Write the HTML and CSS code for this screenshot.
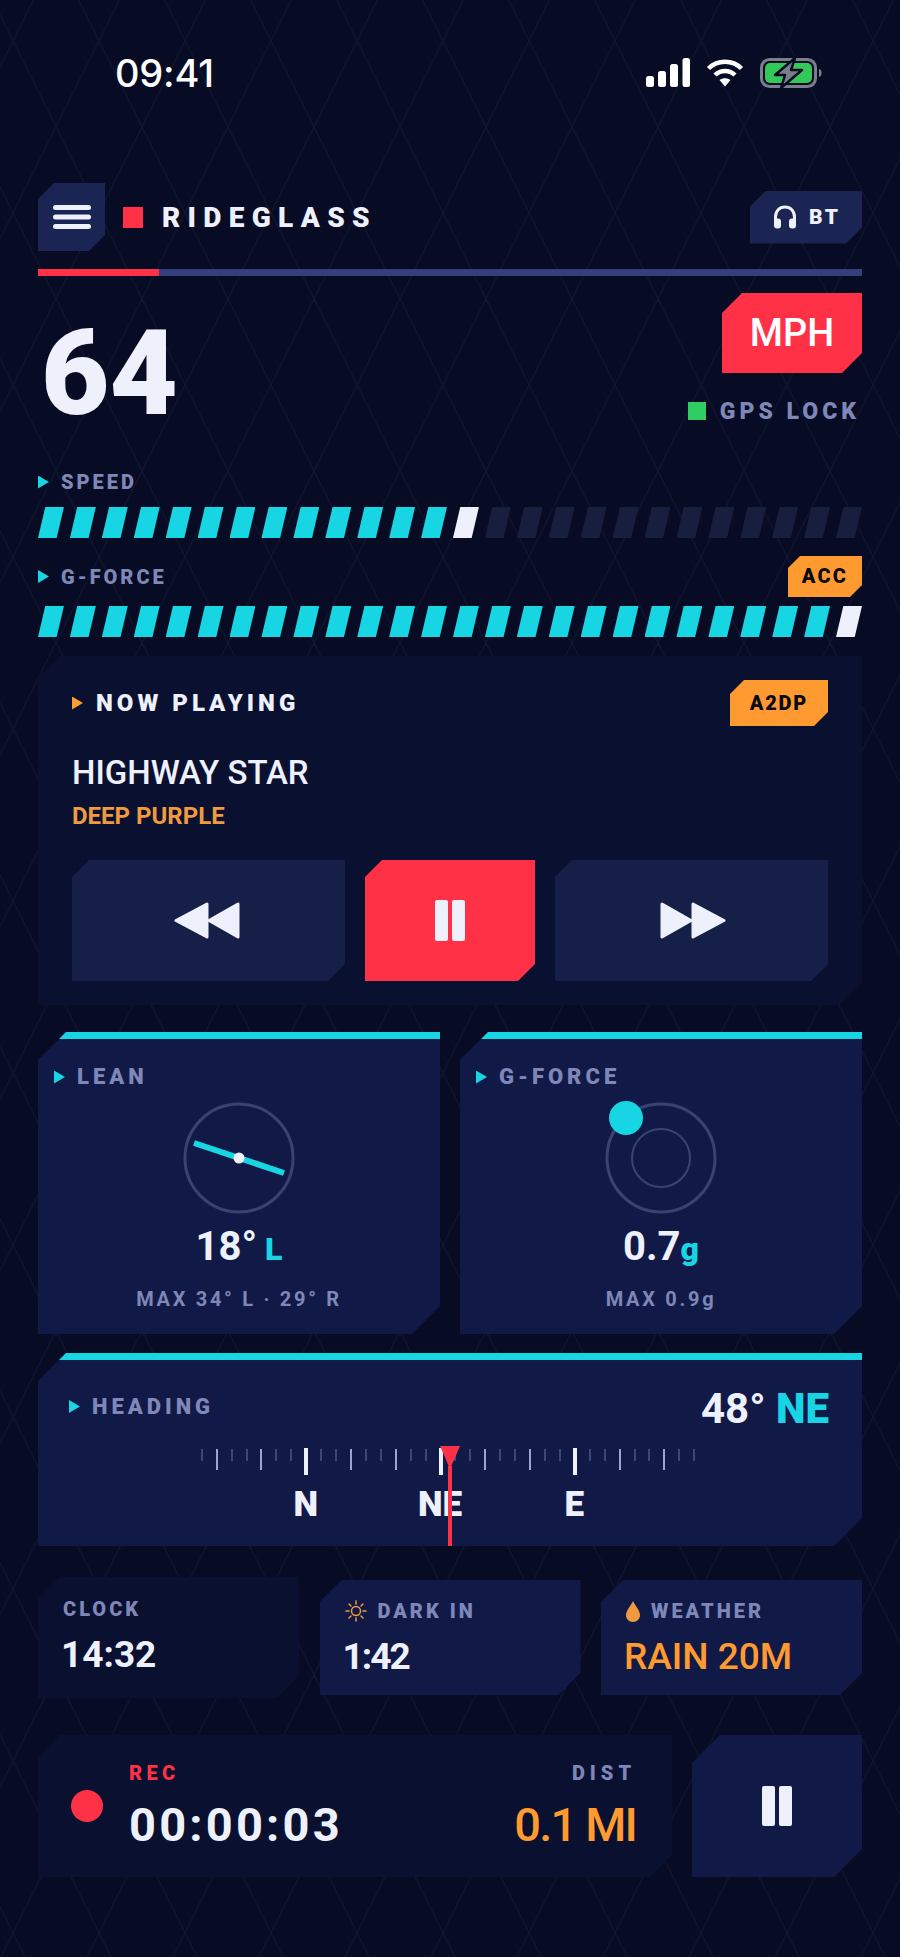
FILE: index.html
```html
<!DOCTYPE html>
<html lang="en">
<head>
  <meta charset="UTF-8">
  <meta name="viewport" content="width=device-width, initial-scale=1">
  <title>RideGlass</title>
  <link rel="stylesheet" href="styles.css">
</head>
<body>
<div class="screen">

  <!-- Status bar -->
  <div class="status">
    <span class="status-time">09:41</span>
    <div class="status-icons">
      <svg width="44" height="30" viewBox="0 0 44 30" fill="#fff">
        <rect x="0" y="18" width="8" height="11" rx="2.500"/>
        <rect x="12" y="13" width="8" height="16" rx="2.500"/>
        <rect x="24" y="6" width="8" height="23" rx="2.500"/>
        <rect x="36.500" y="0" width="7.500" height="29" rx="2.500"/>
      </svg>
      <svg width="38" height="30" viewBox="0 0 38 30" fill="none" stroke="#fff" stroke-width="4.500">
        <path d="M2.500 10.500C11.500 1.500 26.500 1.500 35.500 10.500"/>
        <path d="M9 17C14.500 11.500 23.500 11.500 29 17"/>
        <path d="M13.500 22L19 28.500L24.500 22C21 19.500 17 19.500 13.500 22Z" fill="#fff" stroke="none"/>
      </svg>
      <svg width="62" height="30" viewBox="0 0 62 30">
        <rect x="1.500" y="1.500" width="54" height="27" rx="8" fill="none" stroke="#7b7e8d" stroke-width="3"/>
        <rect x="5" y="5" width="47" height="20" rx="5" fill="#34c759"/>
        <path d="M59 11C61 11.500 61.500 13 61.500 15C61.500 17 61 18.500 59 19Z" fill="#7b7e8d"/>
        <path d="M35 0L15 17H25L21 30L42 12H31Z" fill="#7b7e8d" stroke="#060a22" stroke-width="2.500" stroke-linejoin="round"/>
      </svg>
    </div>
  </div>

  <!-- Top bar -->
  <div class="topbar">
    <button class="menu-btn">
      <svg width="38" height="24" viewBox="0 0 38 24" fill="#eef1fb">
        <rect x="0" y="0" width="38" height="5" rx="2.500"/>
        <rect x="0" y="9.500" width="38" height="5" rx="2.500"/>
        <rect x="0" y="19" width="38" height="5" rx="2.500"/>
      </svg>
    </button>
    <span class="brand-mark"></span>
    <span class="brand">RIDEGLASS</span>
    <div class="bt-chip">
      <svg width="24" height="24" viewBox="0 0 24 24">
        <path d="M2.500 17V12C2.500 6 6.500 2 12 2C17.500 2 21.500 6 21.500 12V17" fill="none" stroke="#eef1fb" stroke-width="3"/>
        <rect x="1" y="13.500" width="7" height="10" rx="3" fill="#eef1fb"/>
        <rect x="16" y="13.500" width="7" height="10" rx="3" fill="#eef1fb"/>
      </svg>
      <span>BT</span>
    </div>
  </div>

  <div class="trip-bar"><div class="trip-fill"></div></div>

  <!-- Speed readout -->
  <div class="speed-row">
    <div class="speed-value">64</div>
    <div class="speed-side">
      <div class="unit-btn">MPH</div>
      <div class="gps"><span class="gps-dot"></span><span class="gps-text">GPS LOCK</span></div>
    </div>
  </div>

  <!-- Meters -->
  <div class="meter-head first"><span class="label"><i class="tri"></i>SPEED</span></div>
  <div class="meter meter-speed">
    <span class="seg on"></span><span class="seg on"></span><span class="seg on"></span><span class="seg on"></span><span class="seg on"></span><span class="seg on"></span><span class="seg on"></span><span class="seg on"></span><span class="seg on"></span><span class="seg on"></span><span class="seg on"></span><span class="seg on"></span><span class="seg on"></span><span class="seg tip"></span>
    <span class="seg"></span><span class="seg"></span><span class="seg"></span><span class="seg"></span><span class="seg"></span><span class="seg"></span><span class="seg"></span><span class="seg"></span><span class="seg"></span><span class="seg"></span><span class="seg"></span><span class="seg"></span>
  </div>
  <div class="meter-head second">
    <span class="label"><i class="tri"></i>G-FORCE</span>
    <span class="badge badge-acc">ACC</span>
  </div>
  <div class="meter meter-g">
    <span class="seg on"></span><span class="seg on"></span><span class="seg on"></span><span class="seg on"></span><span class="seg on"></span><span class="seg on"></span><span class="seg on"></span><span class="seg on"></span><span class="seg on"></span><span class="seg on"></span><span class="seg on"></span><span class="seg on"></span><span class="seg on"></span>
    <span class="seg on"></span><span class="seg on"></span><span class="seg on"></span><span class="seg on"></span><span class="seg on"></span><span class="seg on"></span><span class="seg on"></span><span class="seg on"></span><span class="seg on"></span><span class="seg on"></span><span class="seg on"></span><span class="seg on"></span><span class="seg tip"></span>
  </div>

  <!-- Now playing -->
  <section class="player">
    <div class="player-head">
      <span class="player-title"><i class="tri orange"></i>NOW PLAYING</span>
      <span class="badge badge-a2dp">A2DP</span>
    </div>
    <div class="track">HIGHWAY STAR</div>
    <div class="artist">DEEP PURPLE</div>
    <div class="controls">
      <button class="ctl">
        <svg class="ico-prev" width="66" height="37" viewBox="0 0 66 37" fill="#eef1fb" stroke="#eef1fb" stroke-width="3" stroke-linejoin="round">
          <path d="M2 18.500L33 2V35Z"/><path d="M35 18.500L64 2V35Z"/>
        </svg>
      </button>
      <button class="ctl ctl-main">
        <svg width="30" height="41" viewBox="0 0 30 41" fill="#eef1fb">
          <rect x="0" y="0" width="13" height="41" rx="2"/><rect x="17" y="0" width="13" height="41" rx="2"/>
        </svg>
      </button>
      <button class="ctl">
        <svg class="ico-next" width="66" height="37" viewBox="0 0 66 37" fill="#eef1fb" stroke="#eef1fb" stroke-width="3" stroke-linejoin="round">
          <path d="M2 2L31 18.500L2 35Z"/><path d="M33 2L64 18.500L33 35Z"/>
        </svg>
      </button>
    </div>
  </section>

  <!-- Lean and g-force -->
  <div class="dials">
    <section class="panel dial">
      <span class="label"><i class="tri"></i>LEAN</span>
      <svg class="dial-gfx" width="112" height="112" viewBox="0 0 112 112">
        <circle cx="56" cy="56" r="54" fill="none" stroke="#3a4272" stroke-width="3"/>
        <line x1="11" y1="41" x2="101" y2="71" stroke="#17d5e3" stroke-width="6"/>
        <circle cx="56" cy="56" r="5.500" fill="#eef1fb"/>
      </svg>
      <div class="dial-value">18°<em class="dial-unit spaced">L</em></div>
      <div class="dial-max">MAX 34° L · 29° R</div>
    </section>
    <section class="panel dial">
      <span class="label"><i class="tri"></i>G-FORCE</span>
      <svg class="dial-gfx" width="112" height="112" viewBox="0 0 112 112" overflow="visible">
        <circle cx="56" cy="56" r="54" fill="none" stroke="#3a4272" stroke-width="3"/>
        <circle cx="56" cy="56" r="29" fill="none" stroke="#3a4272" stroke-width="2"/>
        <circle cx="21" cy="16" r="17" fill="#17d5e3"/>
      </svg>
      <div class="dial-value">0.7<em class="dial-unit">g</em></div>
      <div class="dial-max">MAX 0.9g</div>
    </section>
  </div>

  <!-- Heading -->
  <section class="panel heading">
    <div class="heading-head">
      <span class="label"><i class="tri"></i>HEADING</span>
      <span class="heading-value">48° <em>NE</em></span>
    </div>
    <div class="ticks">
      <i class="t"></i><i class="t m"></i><i class="t"></i><i class="t"></i><i class="t m"></i><i class="t"></i><i class="t"></i><i class="t big"></i>
      <i class="t"></i><i class="t"></i><i class="t m"></i><i class="t"></i><i class="t"></i><i class="t m"></i><i class="t"></i><i class="t"></i><i class="t big"></i>
      <i class="t"></i><i class="t"></i><i class="t m"></i><i class="t"></i><i class="t"></i><i class="t m"></i><i class="t"></i><i class="t"></i><i class="t big"></i>
      <i class="t"></i><i class="t"></i><i class="t m"></i><i class="t"></i><i class="t"></i><i class="t m"></i><i class="t"></i><i class="t"></i>
    </div>
    <div class="compass">
      <span>N</span><span>NE</span><span>E</span>
    </div>
    <div class="needle"><span class="needle-head"></span></div>
  </section>

  <!-- Small stats -->
  <div class="stats">
    <div class="stat stat-clock">
      <span class="stat-label">CLOCK</span>
      <span class="stat-value">14:32</span>
    </div>
    <div class="stat">
      <span class="stat-label">
        <svg width="22" height="22" viewBox="0 0 22 22" fill="none" stroke="#f09a40" stroke-width="1.500" stroke-linecap="round">
          <circle cx="11" cy="11" r="4.500"/>
          <path d="M11 1V4M11 18V21M1 11H4M18 11H21M4 4L6 6M16 16L18 18M18 4L16 6M6 16L4 18"/>
        </svg>
        DARK IN
      </span>
      <span class="stat-value tight">1:42</span>
    </div>
    <div class="stat">
      <span class="stat-label">
        <svg width="14" height="21" viewBox="0 0 14 21" fill="#f09a40">
          <path d="M7 0C9 5 14 9 14 14C14 18 11 21 7 21C3 21 0 18 0 14C0 9 5 5 7 0Z"/>
        </svg>
        WEATHER
      </span>
      <span class="stat-value orange-text">RAIN 20M</span>
    </div>
  </div>

  <!-- Recording -->
  <div class="rec-row">
    <div class="rec-card">
      <span class="rec-dot"></span>
      <div class="rec-main">
        <span class="rec-label">REC</span>
        <span class="rec-time">00:00:03</span>
      </div>
      <div class="rec-dist">
        <span class="dist-label">DIST</span>
        <span class="dist-value">0.1 MI</span>
      </div>
    </div>
    <button class="rec-pause">
      <svg width="30" height="40" viewBox="0 0 30 40" fill="#eef1fb">
        <rect x="0" y="0" width="13" height="40" rx="2"/><rect x="17" y="0" width="13" height="40" rx="2"/>
      </svg>
    </button>
  </div>

</div>
</body>
</html>
```

FILE: styles.css
```css
* {
  box-sizing: border-box;
}
:root {
  --cyan: #17d5e3;
  --red: #ff3146;
  --orange: #ff9a30;
  --white: #eef1fb;
  --muted: #7f86b8;
  --panel: #111a47;
  --panel-dark: #0a1030;
  --chip: #1a2553;
}
body {
  margin: 0;
  background-color: #070b24;
  color: var(--white);
  font-family: "Roboto", "Liberation Sans", sans-serif;
}
button {
  border: none;
  padding: 0;
  font: inherit;
  color: inherit;
}
em {
  font-style: normal;
}
.screen {
  width: 900px;
  height: 1957px;
  padding: 0 38px;
  overflow: hidden;
  background-image: url("data:image/svg+xml,%3Csvg xmlns='http://www.w3.org/2000/svg' width='86' height='172'%3E%3Cg stroke='%23111630' stroke-width='1.200' fill='none'%3E%3Cpath d='M-7.500 0L78.500 172M78.500 0L164.500 172M33.500 0L-52.500 172M119.500 0L33.500 172'/%3E%3C/g%3E%3C/svg%3E");
  background-size: 86px 172px;
}

/* Cut corners: top left and bottom right */
.menu-btn, .bt-chip, .unit-btn, .badge, .player, .ctl, .panel, .stat, .rec-card, .rec-pause {
  --cut: 16px;
  clip-path: polygon(var(--cut) 0, 100% 0, 100% calc(100% - var(--cut)), calc(100% - var(--cut)) 100%, 0 100%, 0 var(--cut));
}

/* Status bar */
.status {
  display: flex;
  justify-content: space-between;
  align-items: center;
  width: 707px;
  height: 30px;
  margin: 58px 0 0 77px;
}
.status-time {
  font-family: "Inter", sans-serif;
  font-size: 38px;
  font-weight: 500;
  letter-spacing: -0.2px;
  color: #fff;
}
.status-icons {
  display: flex;
  align-items: center;
  gap: 16px;
}

/* Top bar */
.topbar {
  display: flex;
  align-items: center;
  height: 68px;
  margin-top: 95px;
}
.menu-btn {
  display: flex;
  align-items: center;
  justify-content: center;
  width: 67px;
  height: 68px;
  background: var(--chip);
}
.brand-mark {
  width: 20px;
  height: 21px;
  margin-left: 18px;
  background: var(--red);
}
.brand {
  margin-left: 19px;
  font-size: 28px;
  font-weight: 900;
  letter-spacing: 7.300px;
}
.bt-chip {
  display: flex;
  align-items: center;
  gap: 12px;
  width: 112px;
  height: 53px;
  margin-left: auto;
  padding-left: 23px;
  background: var(--chip);
  font-size: 21px;
  font-weight: 900;
  letter-spacing: 2.500px;
}
.trip-bar {
  height: 7px;
  margin-top: 18px;
  background: #33407c;
}
.trip-fill {
  width: 121px;
  height: 100%;
  background: var(--red);
}

/* Speed */
.speed-row {
  display: flex;
  justify-content: space-between;
  margin-top: 17px;
  height: 127px;
}
.speed-value {
  margin: 22px 0 0 3px;
  font-size: 118px;
  line-height: 118px;
  font-weight: 900;
  letter-spacing: 0;
}
.speed-side {
  display: flex;
  flex-direction: column;
  align-items: flex-end;
}
.unit-btn {
  --cut: 20px;
  width: 140px;
  height: 80px;
  background: var(--red);
  color: #fff;
  font-size: 38px;
  font-weight: 500;
  line-height: 80px;
  text-align: center;
}
.gps {
  display: flex;
  align-items: center;
  height: 18px;
  margin-top: 29px;
  padding-right: 2px;
}
.gps-dot {
  width: 18px;
  height: 18px;
  background: #2fce64;
}
.gps-text {
  margin-left: 14px;
  font-size: 23px;
  font-weight: 900;
  letter-spacing: 4px;
  color: var(--muted);
}

/* Labels and meters */
.label {
  display: inline-flex;
  align-items: center;
  font-size: 20px;
  font-weight: 900;
  letter-spacing: 3px;
  color: var(--muted);
}
.panel .label {
  font-size: 22px;
  letter-spacing: 4px;
}
.tri {
  display: inline-block;
  width: 11px;
  height: 13px;
  margin-right: 12px;
  background: var(--cyan);
  clip-path: polygon(0 0, 100% 50%, 0 100%);
}
.tri.orange {
  background: var(--orange);
}
.meter-head {
  display: flex;
  justify-content: space-between;
  align-items: center;
}
.meter-head.first {
  height: 14px;
  margin-top: 55px;
}
.meter-head.second {
  height: 41px;
  margin-top: 18px;
}
.meter {
  display: flex;
  gap: 6px;
  height: 31px;
}
.meter-speed {
  margin-top: 18px;
}
.meter-g {
  margin-top: 9px;
}
.seg {
  flex: 1;
  background: #181e3e;
  clip-path: polygon(28% 0, 100% 0, 72% 100%, 0 100%);
}
.seg.on {
  background: var(--cyan);
}
.seg.tip {
  background: var(--white);
}
.badge {
  display: block;
  background: var(--orange);
  color: #0a0a14;
  font-weight: 900;
  text-align: center;
}
.badge-acc {
  --cut: 12px;
  width: 74px;
  height: 41px;
  font-size: 20px;
  line-height: 41px;
  letter-spacing: 2.200px;
}
.badge-a2dp {
  --cut: 14px;
  width: 98px;
  height: 46px;
  font-size: 20px;
  line-height: 46px;
  letter-spacing: 1.800px;
}

/* Player */
.player {
  --cut: 22px;
  height: 349px;
  margin-top: 19px;
  padding: 24px 34px 0;
  background: var(--panel-dark);
}
.player-head {
  display: flex;
  justify-content: space-between;
  align-items: center;
  height: 46px;
}
.player-title {
  display: inline-flex;
  align-items: center;
  font-size: 24px;
  font-weight: 900;
  letter-spacing: 4px;
}
.player-title .tri {
  margin-right: 13px;
}
.track {
  margin-top: 27px;
  font-size: 33px;
  line-height: 40px;
  font-weight: 500;
}
.artist {
  margin-top: 9px;
  font-size: 24px;
  line-height: 28px;
  font-weight: 700;
  color: #f09a40;
}
.controls {
  display: grid;
  grid-template-columns: 273px 170px 273px;
  gap: 20px;
  margin-top: 30px;
}
.ctl {
  --cut: 17px;
  display: flex;
  align-items: center;
  justify-content: center;
  height: 121px;
  background: #161f47;
}
.ctl-main {
  background: var(--red);
}
.ico-prev {
  margin-right: 4px;
}
.ico-next {
  margin-left: 2px;
}

/* Panels */
.panel {
  --cut: 28px;
  position: relative;
  background: var(--panel);
  border-top: 7px solid var(--cyan);
}
.dials {
  display: grid;
  grid-template-columns: 402px 402px;
  gap: 20px;
  margin-top: 27px;
}
.dial {
  display: flex;
  flex-direction: column;
  align-items: center;
  height: 302px;
  padding-top: 29px;
}
.dial .label {
  align-self: flex-start;
  margin-left: 16px;
  line-height: 18px;
}
.dial-gfx {
  margin-top: 16px;
}
.dial-value {
  margin-top: 9px;
  font-size: 40px;
  line-height: 48px;
  font-weight: 700;
}
.dial-unit {
  font-size: 32px;
  font-weight: 900;
  color: var(--cyan);
}
.dial-unit.spaced {
  margin-left: 8px;
}
.dial-max {
  margin-top: 16px;
  font-size: 20px;
  line-height: 20px;
  font-weight: 700;
  letter-spacing: 2.700px;
  color: var(--muted);
}

/* Heading */
.heading {
  height: 193px;
  margin-top: 19px;
}
.heading-head {
  display: flex;
  justify-content: space-between;
  align-items: center;
  height: 48px;
  margin-top: 24px;
  padding: 0 33px 0 31px;
}
.heading .label {
  margin-top: -3px;
}
.heading-value {
  font-size: 42px;
  font-weight: 700;
}
.heading-value em {
  font-weight: 900;
  color: var(--cyan);
}
.ticks {
  display: flex;
  justify-content: center;
  gap: 12.930px;
  height: 28px;
  margin-top: 16px;
  padding-right: 4px;
}
.t {
  width: 2px;
  height: 12px;
  margin-top: 1px;
  background: #3c4579;
}
.t.m {
  height: 21px;
  background: #9aa5d6;
}
.t.big {
  width: 4px;
  height: 27px;
  margin: 0 -1px;
  background: var(--white);
}
.compass {
  display: grid;
  grid-template-columns: repeat(3, 134.300px);
  justify-content: center;
  margin-top: 13px;
  padding-right: 20px;
  font-size: 35px;
  line-height: 32px;
  font-weight: 900;
  text-align: center;
}
.needle {
  position: absolute;
  left: 410px;
  top: 106px;
  width: 4px;
  height: 80px;
  background: var(--red);
}
.needle-head {
  position: absolute;
  left: -8px;
  top: -20px;
  width: 20px;
  height: 23px;
  background: var(--red);
  clip-path: polygon(0 0, 100% 0, 50% 100%);
}

/* Stats */
.stats {
  display: grid;
  grid-template-columns: repeat(3, 261px);
  justify-content: space-between;
  align-items: center;
  height: 121px;
  margin-top: 31px;
}
.stat {
  --cut: 22px;
  display: flex;
  flex-direction: column;
  height: 115px;
  padding: 20px 0 0 25px;
  background: var(--panel);
}
.stat-clock {
  height: 121px;
  padding-top: 21px;
  background: var(--panel-dark);
}
.stat-label {
  display: flex;
  align-items: center;
  gap: 11px;
  height: 22px;
  font-size: 20px;
  font-weight: 900;
  letter-spacing: 3px;
  color: var(--muted);
}
.stat-value {
  margin: 12px 0 0 -2px;
  font-size: 37px;
  line-height: 46px;
  font-weight: 700;
}
.stat-value.tight {
  letter-spacing: -2px;
}
.orange-text {
  color: var(--orange);
  font-weight: 500;
}

/* Recording */
.rec-row {
  display: grid;
  grid-template-columns: 634px 170px;
  gap: 20px;
  margin-top: 37px;
}
.rec-card {
  --cut: 22px;
  display: flex;
  align-items: center;
  height: 142px;
  padding: 0 36px 0 33px;
  background: var(--panel-dark);
}
.rec-dot {
  width: 32px;
  height: 32px;
  border-radius: 50%;
  background: var(--red);
}
.rec-main, .rec-dist {
  display: flex;
  flex-direction: column;
  margin-top: 1px;
}
.rec-main {
  margin-left: 26px;
}
.rec-dist {
  align-items: flex-end;
  margin-left: auto;
}
.rec-label, .dist-label {
  font-size: 20px;
  line-height: 22px;
  font-weight: 900;
  letter-spacing: 4.400px;
}
.rec-label {
  color: var(--red);
}
.dist-label {
  letter-spacing: 5px;
  color: var(--muted);
}
.rec-time, .dist-value {
  margin-top: 14px;
  font-size: 47px;
  line-height: 54px;
  font-weight: 700;
}
.rec-time {
  letter-spacing: 3.200px;
}
.dist-value {
  letter-spacing: -1.800px;
  color: var(--orange);
  font-weight: 500;
}
.rec-pause {
  --cut: 28px;
  display: flex;
  align-items: center;
  justify-content: center;
  height: 142px;
  background: var(--panel);
}
```
